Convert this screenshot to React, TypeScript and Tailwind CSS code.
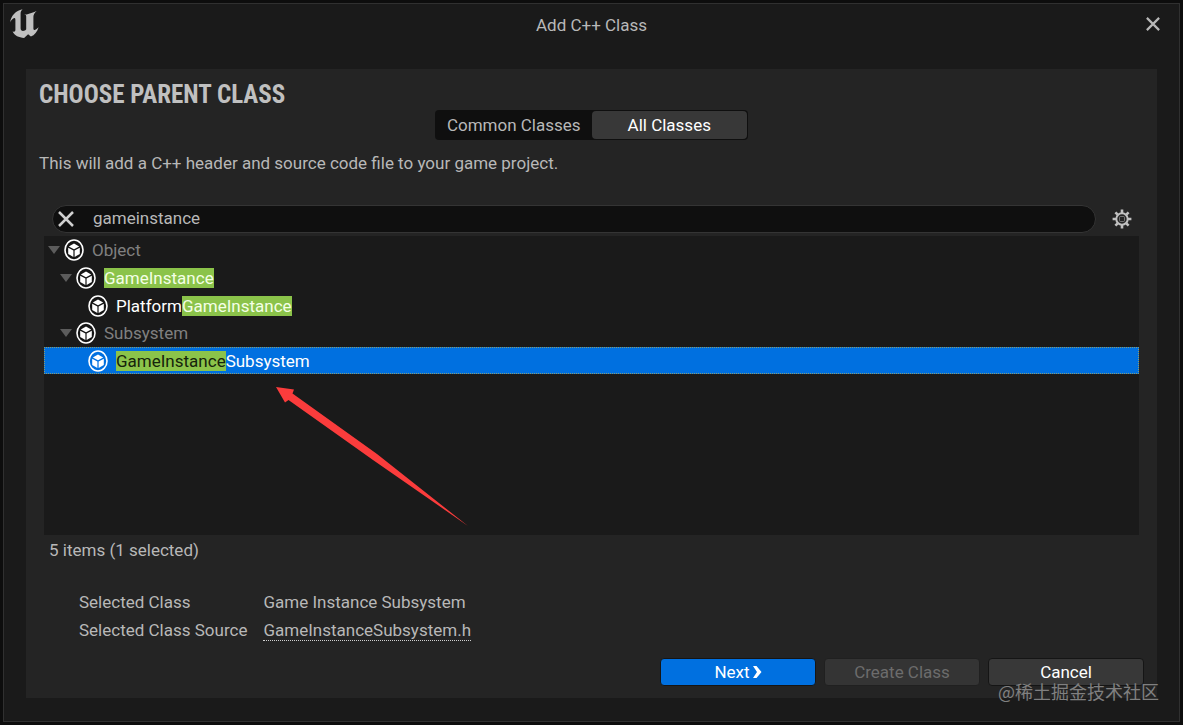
import { useState } from 'react'
import clsx from 'clsx'

interface ClassNode {
  name: string
  depth: number
  expandable?: boolean
  dimmed?: boolean
}

const CLASSES: ClassNode[] = [
  { name: 'Object', depth: 0, expandable: true, dimmed: true },
  { name: 'GameInstance', depth: 1, expandable: true },
  { name: 'PlatformGameInstance', depth: 2 },
  { name: 'Subsystem', depth: 1, expandable: true, dimmed: true },
  { name: 'GameInstanceSubsystem', depth: 2 },
]

const INDENTS = ['pl-1', 'pl-4', 'pl-7']

const UnrealLogo = () => (
  <svg viewBox="0 0 30 30" className="w-[30px] h-[30px]" fill="#c0c0c0" aria-hidden="true">
    <path d="M0 14.500C1 8 5.500 2.500 12.600 1.200C11.200 2.500 10.600 3.700 10.600 5.400V20.200C10.600 21.900 11.600 22.900 13 22.900C14.400 22.900 15.600 22.200 16.200 21.200V8.600C16.200 7.200 15.600 6.700 14.600 6.900C18.200 5.900 22.800 4.600 26.600 2.900C24.300 5 23.400 6.800 23.400 8.800V20.600C23.400 22 24.100 22.400 25.300 21.700C26.700 20.900 27.800 20 28.600 19.200C27.200 23.800 24.600 27 20.900 28.600L18.100 26.200L14.100 30C8.700 29.700 4.600 27.700 2.600 23.600C4.100 24 5.400 23.400 5.400 21.700V12C5.400 10.200 4.800 9.600 3.700 10.300C2.200 11.200 .9 12.600 0 14.500Z" />
  </svg>
)

const CrossIcon = ({ className }: { className?: string }) => (
  <svg viewBox="0 0 16 16" className={className} fill="none" stroke="currentColor" aria-hidden="true">
    <path d="M1 1L15 15M15 1L1 15" />
  </svg>
)

const GearIcon = () => (
  <svg viewBox="0 0 20 20" className="w-5 h-5" fill="none" stroke="currentColor" aria-hidden="true">
    <circle cx="10" cy="10" r="5.700" strokeWidth="2" />
    <rect x="7.500" y="7.500" width="5" height="5" rx="1" strokeWidth="1" opacity="0.5" />
    <path
      strokeWidth="2.600"
      d="M10 .6V4M10 16V19.400M.6 10H4M16 10H19.400M3.400 3.400L5.700 5.700M14.300 14.300L16.600 16.600M3.400 16.600L5.700 14.300M14.300 5.700L16.600 3.400"
    />
  </svg>
)

const ClassIcon = ({ fill }: { fill: string }) => (
  <svg viewBox="0 0 20 22" className="w-5 h-[22px] shrink-0" aria-hidden="true">
    <ellipse cx="10" cy="11" rx="9" ry="10" fill={fill} stroke="#fff" strokeWidth="1.600" />
    <path d="M10 4.500L15.200 7.400L10 10.300L4.800 7.400Z" fill="#fff" />
    <path d="M4.200 8.700L9.400 11.600V17.900L4.200 14.900Z" fill="#fff" />
    <path d="M15.800 8.700L10.600 11.600V17.900L15.800 14.900Z" fill="#fff" />
  </svg>
)

interface HighlightedProps {
  text: string
  term: string
  selected: boolean
}

const Highlighted = ({ text, term, selected }: HighlightedProps) => {
  const start = term ? text.toLowerCase().indexOf(term.toLowerCase()) : -1
  if (start < 0) {
    return <>{text}</>
  }
  const end = start + term.length
  return (
    <>
      {text.slice(0, start)}
      <mark className={clsx('bg-[#8bc34a]', selected ? 'text-[#16240c]' : 'text-[#f4ffe6]')}>
        {text.slice(start, end)}
      </mark>
      {text.slice(end)}
    </>
  )
}

interface ClassRowProps {
  node: ClassNode
  term: string
  selected: boolean
  onSelect: () => void
}

const ClassRow = ({ node, term, selected, onSelect }: ClassRowProps) => (
  <li
    role="treeitem"
    aria-level={node.depth + 1}
    aria-selected={selected}
    onClick={onSelect}
    className={clsx(
      'flex items-center text-white',
      INDENTS[node.depth],
      node.expandable ? 'h-7' : 'h-[27px]',
      selected && 'bg-[#0070e0] outline-1 -outline-offset-1 outline-dotted outline-[#8a9a70]'
    )}
  >
    <span className="w-4 shrink-0">
      {node.expandable && (
        <button type="button" aria-label={`Collapse ${node.name}`} className="block">
          <svg viewBox="0 0 12 8" className="w-3 h-2" fill="#5c5c5c">
            <path d="M0 0H12L6 8Z" />
          </svg>
        </button>
      )}
    </span>
    <ClassIcon fill={selected ? '#0070e0' : '#151515'} />
    <span className={clsx('ml-2 leading-5', node.dimmed && 'text-[#808080]')}>
      <Highlighted text={node.name} term={term} selected={selected} />
    </span>
  </li>
)

export default function App() {
  const [tab, setTab] = useState('All Classes')
  const [search, setSearch] = useState('gameinstance')
  const [selected, setSelected] = useState('GameInstanceSubsystem')

  return (
    <div className="min-h-screen flex bg-[#0d0d0d] p-[3px] font-['Roboto',sans-serif] text-[17px] leading-5 text-[#b8b8b8]">
      <div className="relative flex-1 flex flex-col border border-[#303030] bg-[#1a1a1a] px-[22px] pb-[23px]">
        <header className="grid grid-cols-[1fr_auto_1fr] items-start h-[65px] shrink-0 -mx-4 pt-1">
          <UnrealLogo />
          <h1 className="pt-[7px]">Add C++ Class</h1>
          <button type="button" aria-label="Close" className="justify-self-end mr-1 p-2">
            <CrossIcon className="w-4 h-4 p-px stroke-[2.5]" />
          </button>
        </header>

        <main className="flex-1 flex flex-col bg-[#242424] px-[13px] pt-3">
          <h2 className="text-[25px] leading-7 font-bold text-[#c0c0c0] font-['Roboto_Condensed','Liberation_Sans_Narrow',sans-serif]">
            CHOOSE PARENT CLASS
          </h2>
          <div role="tablist" className="self-center flex h-[30px] w-[313px] mt-px rounded bg-[#0f0f0f] p-px">
            {['Common Classes', 'All Classes'].map((label) => (
              <button
                key={label}
                type="button"
                role="tab"
                aria-selected={tab === label}
                onClick={() => setTab(label)}
                className={clsx('flex-1 rounded', tab === label && 'bg-[#383838] text-white')}
              >
                {label}
              </button>
            ))}
          </div>
          <p className="mt-[13px]">This will add a C++ header and source code file to your game project.</p>

          <div className="flex-1 flex flex-col mt-8 mx-[5px]">
            <div className="flex items-center justify-between pl-2 pr-[7px]">
              <div className="flex-1 flex items-center h-7 rounded-full border border-[#343434] bg-[#0f0f0f] pl-1">
                <button type="button" aria-label="Clear search" onClick={() => setSearch('')} className="p-px">
                  <CrossIcon className="w-4 h-4 stroke-[2.5] text-[#d0d0d0]" />
                </button>
                <input
                  type="text"
                  aria-label="Search classes"
                  value={search}
                  onChange={(e) => setSearch(e.target.value)}
                  className="flex-1 ml-[18px] pb-0.5 bg-transparent outline-none"
                />
              </div>
              <button type="button" aria-label="View options" className="ml-4 text-[#c0c0c0]">
                <GearIcon />
              </button>
            </div>

            <div className="relative flex-1 mt-[3px] bg-[#1a1a1a]">
              <ul role="tree" aria-label="Parent classes">
                {CLASSES.map((node) => (
                  <ClassRow
                    key={node.name}
                    node={node}
                    term={search}
                    selected={selected === node.name}
                    onSelect={() => setSelected(node.name)}
                  />
                ))}
              </ul>
              <svg viewBox="0 0 192 140" className="absolute left-[232px] top-[151px] w-48 h-[140px]" fill="#fb3c3c" aria-hidden="true">
                <path d="M0 0L18 2.500L16.500 6.500L101 67L192 139L97 73L12.500 13L9 15.500Z" />
              </svg>
            </div>
          </div>

          <p className="mt-[5px] ml-2.5">5 items (1 selected)</p>

          <dl className="grid grid-cols-[auto_1fr] gap-x-4 gap-y-2 mt-8 ml-10">
            <dt>Selected Class</dt>
            <dd>Game Instance Subsystem</dd>
            <dt>Selected Class Source</dt>
            <dd>
              <a href="#source" className="inline-block border-b border-dotted border-[#d0d0d0]">
                GameInstanceSubsystem.h
              </a>
            </dd>
          </dl>

          <footer className="flex justify-end gap-2 mt-[17px] mb-3">
            <button type="button" className="flex items-center justify-center w-[156px] h-7 rounded border border-[#151515] bg-[#0070e0] text-white">
              Next
              <svg viewBox="0 0 10 12" className="w-2.5 h-3 ml-0.5" fill="currentColor" aria-hidden="true">
                <path d="M1 0H4.500L9.500 6L4.500 12H1L5 6Z" />
              </svg>
            </button>
            <button type="button" disabled className="w-[156px] h-7 rounded border border-[#202020] bg-[#343434] text-[#6c6c6c]">
              Create Class
            </button>
            <button type="button" className="w-[156px] h-7 rounded border border-[#151515] bg-[#383838] text-white">
              Cancel
            </button>
          </footer>
        </main>

        <span className="absolute right-5 bottom-5 text-lg leading-5 text-[#808080] font-['Noto_Sans_CJK_SC',sans-serif]">
          @稀土掘金技术社区
        </span>
      </div>
    </div>
  )
}
